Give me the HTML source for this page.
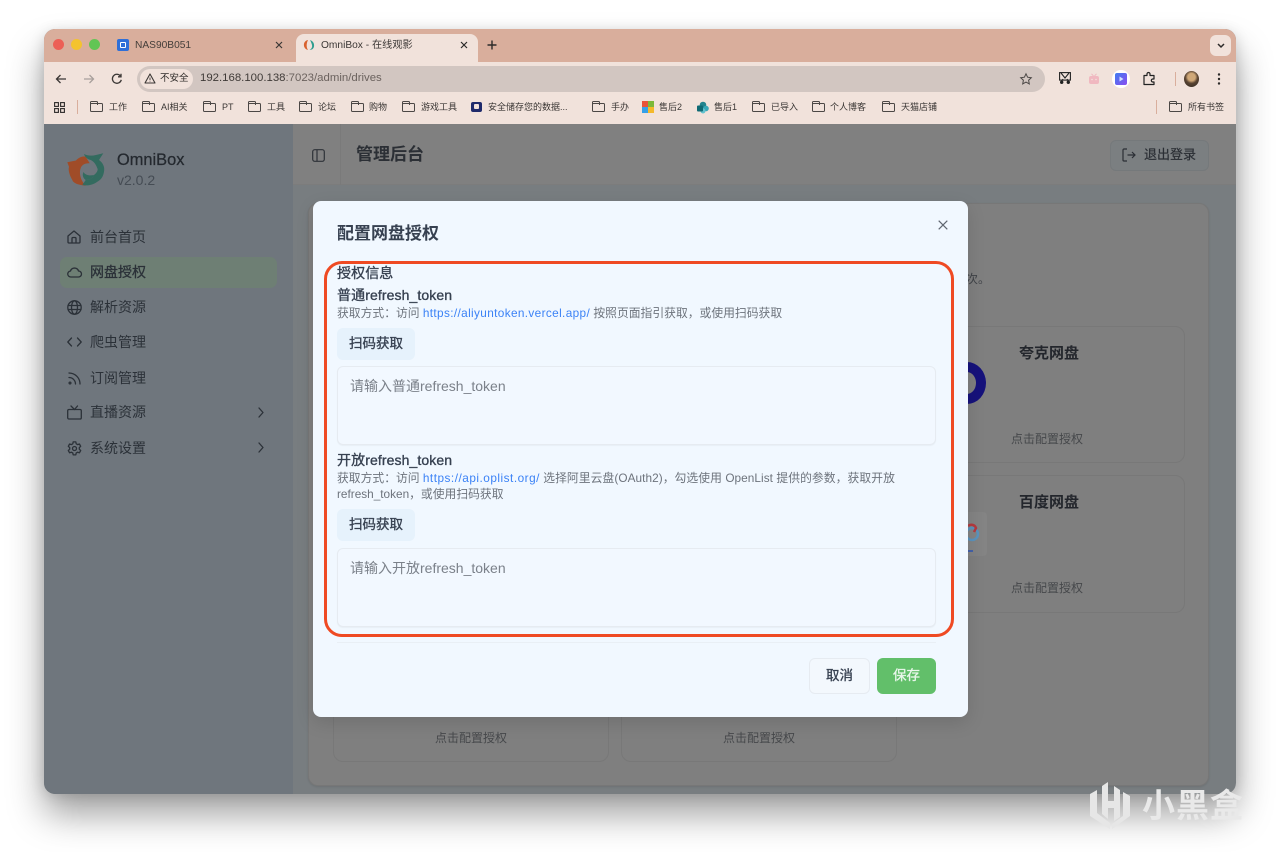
<!DOCTYPE html>
<html lang="zh"><head><meta charset="utf-8"><title>OmniBox</title>
<style>
*{box-sizing:border-box}
html,body{margin:0;padding:0;width:1280px;height:852px;overflow:hidden;background:#fff;font-family:"Liberation Sans","Noto Sans CJK SC",sans-serif}
.a{position:absolute;white-space:nowrap}
svg{position:absolute;overflow:visible}
.bm{position:absolute;top:100px;font-size:9px;line-height:14px;color:#3b3735;white-space:nowrap}
.fd{position:absolute;top:103px;width:13px;height:9px;border:1px solid #4b4745;border-radius:1.5px}
.fd:before{content:"";position:absolute;left:-1px;top:-3px;width:6px;height:3px;border:1px solid #4b4745;border-bottom:0;border-radius:1.5px 1.5px 0 0}
.nav{position:absolute;left:90px;font-size:14px;line-height:20px;color:#2b3138;white-space:nowrap}
.ic{fill:none;stroke:#2b3138;stroke-width:1.3;stroke-linecap:round;stroke-linejoin:round}
.card{position:absolute;background:#7f7f7f;border:1px solid #787878;border-radius:10px}
.hint{position:absolute;font-size:12px;line-height:16px;color:#46484b;white-space:nowrap}
.ct{position:absolute;font-size:15px;font-weight:700;line-height:20px;color:#23262c;white-space:nowrap}
.sub{position:absolute;left:337px;font-size:11.8px;line-height:16px;color:#6d737c;white-space:nowrap}
.sub a{color:#3b82f6;text-decoration:none}
.h3{position:absolute;left:337px;font-size:14px;letter-spacing:.1px;font-weight:400;-webkit-text-stroke:.35px #374151;line-height:18px;color:#374151;white-space:nowrap}
.scan{position:absolute;left:337px;width:78px;height:32px;background:#e6f2fc;border-radius:6px;font-size:13.5px;font-weight:400;-webkit-text-stroke:.35px #374151;line-height:32px;text-align:center;color:#374151}
.ta{position:absolute;left:337px;width:599px;height:79px;background:#f2f8ff;border:1px solid #e6ebf1;border-radius:6px;padding:10px 12px;font-size:14px;line-height:18px;color:#7b818a;box-shadow:0 1px 1px rgba(0,0,0,.04)}
</style></head><body>

<div class="a" style="left:44px;top:32px;width:1192px;height:762px;border-radius:11px;box-shadow:0 20px 36px rgba(0,0,0,.38),0 0 14px rgba(0,0,0,.15)"></div>
<div class="a" style="left:44px;top:29px;width:1192px;height:765px;border-radius:11px;overflow:hidden;background:#787d80">
  <div class="a" style="left:0;top:0;width:1192px;height:33px;background:#d9ae9c"></div>
  <div class="a" style="left:0;top:33px;width:1192px;height:62px;background:#f1e2db"></div>
  <div class="a" style="left:0;top:95px;width:249px;height:670px;background:#6f767d"></div>
  <div class="a" style="left:249px;top:95px;width:943px;height:61px;background:#808080;border-bottom:1px solid #7c7c7c"></div>
  <div class="a" style="left:264px;top:174px;width:901px;height:583px;background:#7f7f7f;border:1px solid #777;border-radius:10px;box-shadow:0 1px 2px rgba(0,0,0,.1)"></div>
</div>

<!-- traffic lights -->
<div class="a" style="left:53px;top:39px;width:11px;height:11px;border-radius:50%;background:#ec5f56"></div>
<div class="a" style="left:71px;top:39px;width:11px;height:11px;border-radius:50%;background:#f4c32f"></div>
<div class="a" style="left:89px;top:39px;width:11px;height:11px;border-radius:50%;background:#62c554"></div>

<!-- tabs -->
<div class="a" style="left:117px;top:39px;width:12px;height:12px;border-radius:2px;background:#2f6fd8"></div>
<div class="a" style="left:120px;top:42px;width:6px;height:6px;border:1.5px solid #fff;border-radius:1px"></div>
<div class="a" style="left:135px;top:38px;font-size:10.2px;line-height:15px;color:#443e3a">NAS90B051</div>
<svg style="left:275px;top:41px" width="8" height="8"><path d="M1 1l6 6M7 1l-6 6" stroke="#3b3735" stroke-width="1.2"/></svg>
<div class="a" style="left:296px;top:34px;width:182px;height:28px;background:#f1e2db;border-radius:8px 8px 0 0"></div>
<svg style="left:303px;top:39px" width="12" height="12" viewBox="0 0 12 12"><path d="M5 1C2 1.500.5 4 1 7c.4 2 2 3.500 4 4-1.500-2-2-6 0-10z" fill="#d9622f"/><path d="M7 1c3 1 4.500 3.500 4 6.500-.5 2.500-2.500 3.500-4.500 3.500 2-1 3-3 2.500-5C8.700 4.500 8 3 7 1z" fill="#2f9d8f"/></svg>
<div class="a" style="left:321px;top:38px;font-size:10.2px;line-height:15px;color:#3b3735">OmniBox - 在线观影</div>
<svg style="left:460px;top:41px" width="8" height="8"><path d="M1 1l6 6M7 1l-6 6" stroke="#2c2a29" stroke-width="1.2"/></svg>
<svg style="left:487px;top:40px" width="10" height="10"><path d="M5 .5v9M.5 5h9" stroke="#2c2a29" stroke-width="1.4"/></svg>
<div class="a" style="left:1210px;top:35px;width:21px;height:21px;background:#f1e2db;border-radius:6px"></div>
<svg style="left:1217px;top:43px" width="8" height="6"><path d="M1 1l3 3 3-3" fill="none" stroke="#2c2a29" stroke-width="1.5"/></svg>

<!-- toolbar -->
<svg style="left:55px;top:73px" width="12" height="12" viewBox="0 0 12 12"><path d="M11 6H1.500M5.500 2 1.500 6l4 4" fill="none" stroke="#3b3735" stroke-width="1.3"/></svg>
<svg style="left:83px;top:73px" width="12" height="12" viewBox="0 0 12 12"><path d="M1 6h9.500M6.500 2l4 4-4 4" fill="none" stroke="#a8a09c" stroke-width="1.3"/></svg>
<svg style="left:111px;top:73px" width="12" height="12" viewBox="0 0 12 12"><path d="M10.300 6.800A4.500 4.500 0 1 1 9.300 2.800M10 .8v3H7" fill="none" stroke="#3b3735" stroke-width="1.3"/></svg>
<div class="a" style="left:137px;top:66px;width:908px;height:26px;background:#d2c6c1;border-radius:13px"></div>
<div class="a" style="left:140px;top:69px;width:53px;height:20px;background:#f1e2db;border-radius:10px"></div>
<svg style="left:144px;top:73px" width="12" height="11" viewBox="0 0 12 11"><path d="M6 1 11 10H1z" fill="none" stroke="#3b3735" stroke-width="1.100" stroke-linejoin="round"/><path d="M6 4.500v2.700M6 8.200v.6" stroke="#3b3735" stroke-width=".9"/></svg>
<div class="a" style="left:160px;top:72px;font-size:9.5px;line-height:14px;color:#302c2a">不安全</div>
<div class="a" style="left:200px;top:71px;font-size:11.4px;line-height:15px;color:#3f3a37">192.168.100.138<span style="color:#6b625e">:7023/admin/drives</span></div>
<svg style="left:1020px;top:73px" width="12" height="12" viewBox="0 0 12 12"><path d="M6 .8 7.600 4.200l3.700.5-2.700 2.500.7 3.700L6 9.100l-3.300 1.800.7-3.700L.7 4.700l3.700-.5z" fill="none" stroke="#4b4745" stroke-width="1"/></svg>

<svg style="left:1059px;top:72px" width="12" height="13" viewBox="0 0 12 13"><rect x=".6" y=".6" width="10.800" height="7.500" fill="none" stroke="#222" stroke-width="1.100"/><path d="M2 1l4 5 4-5M4 7 2.800 9M8 7l1.200 2" fill="none" stroke="#222" stroke-width="1.100"/><circle cx="2.700" cy="10.300" r="1.700" fill="#222"/><circle cx="9.300" cy="10.300" r="1.700" fill="#222"/></svg>
<svg style="left:1088px;top:73px" width="12" height="12" viewBox="0 0 12 12"><rect x="1" y="3" width="10" height="8" rx="2" fill="#f0b8c0"/><path d="M3.500.8 5.500 3M8.500.8 6.500 3" stroke="#f0b8c0" stroke-width="1"/><circle cx="4" cy="6.500" r=".8" fill="#f1e2db"/><circle cx="8" cy="6.500" r=".8" fill="#f1e2db"/></svg>
<div class="a" style="left:1112px;top:70px;width:18px;height:18px;border-radius:50%;background:#fff"></div>
<div class="a" style="left:1115px;top:73px;width:12px;height:12px;border-radius:2px;background:linear-gradient(135deg,#3f7df0,#8a4df0)"></div>
<svg style="left:1119px;top:76px" width="5" height="6"><path d="M.5.500 4.500 3 .5 5.500z" fill="#cfe0ff"/></svg>
<svg style="left:1143px;top:72px" width="13" height="13" viewBox="0 0 13 13"><path d="M1 3.500h3V2a1.500 1.500 0 0 1 3 0v1.500h4v3.500h-1.200a1.500 1.500 0 0 0 0 3H11v2.500H1z" fill="none" stroke="#222" stroke-width="1.200" stroke-linejoin="round"/></svg>
<div class="a" style="left:1175px;top:72px;width:1px;height:14px;background:#d9ae9c"></div>
<div class="a" style="left:1184px;top:71px;width:15px;height:16px;border-radius:50%;background:radial-gradient(circle at 50% 38%,#d0a878 0 30%,#5a4432 50%,#2d2722 100%)"></div>
<svg style="left:1217px;top:73px" width="4" height="12"><circle cx="2" cy="1.500" r="1.200" fill="#2c2a29"/><circle cx="2" cy="6" r="1.200" fill="#2c2a29"/><circle cx="2" cy="10.500" r="1.200" fill="#2c2a29"/></svg>

<!-- bookmarks -->
<svg style="left:54px;top:102px" width="11" height="11" viewBox="0 0 11 11"><g fill="none" stroke="#2c2a29" stroke-width="1.100"><rect x=".6" y=".6" width="3.800" height="3.800"/><rect x="6.600" y=".6" width="3.800" height="3.800"/><rect x=".6" y="6.600" width="3.800" height="3.800"/><rect x="6.600" y="6.600" width="3.800" height="3.800"/></g></svg>
<div class="a" style="left:77px;top:100px;width:1px;height:14px;background:#d9ae9c"></div>
<div class="fd" style="left:90px"></div><div class="bm" style="left:109px">工作</div>
<div class="fd" style="left:142px"></div><div class="bm" style="left:161px">AI相关</div>
<div class="fd" style="left:203px"></div><div class="bm" style="left:222px">PT</div>
<div class="fd" style="left:248px"></div><div class="bm" style="left:267px">工具</div>
<div class="fd" style="left:299px"></div><div class="bm" style="left:318px">论坛</div>
<div class="fd" style="left:351px"></div><div class="bm" style="left:369px">购物</div>
<div class="fd" style="left:402px"></div><div class="bm" style="left:421px">游戏工具</div>
<div class="a" style="left:471px;top:102px;width:11px;height:10px;background:#1f2a6b;border-radius:2px"></div>
<div class="a" style="left:474px;top:104px;width:5px;height:5px;background:#f1e2db;border-radius:1px"></div>
<div class="bm" style="left:488px">安全储存您的数据...</div>
<div class="fd" style="left:592px"></div><div class="bm" style="left:611px">手办</div>
<div class="a" style="left:642px;top:101px;width:5.500px;height:5.500px;background:#e8533a"></div>
<div class="a" style="left:648px;top:101px;width:5.500px;height:5.500px;background:#7cb93a"></div>
<div class="a" style="left:642px;top:107px;width:5.500px;height:5.500px;background:#35a0e8"></div>
<div class="a" style="left:648px;top:107px;width:5.500px;height:5.500px;background:#f4b92c"></div>
<div class="bm" style="left:659px">售后2</div>
<svg style="left:696px;top:101px" width="13" height="13" viewBox="0 0 13 13"><circle cx="7" cy="4" r="3.300" fill="#22848f"/><circle cx="10" cy="7.500" r="2.800" fill="#37a8b8"/><circle cx="7" cy="10" r="2.500" fill="#63c2cf"/><rect x="1" y="4.500" width="6" height="6" rx="1" fill="#0f6a74"/></svg>
<div class="bm" style="left:714px">售后1</div>
<div class="fd" style="left:752px"></div><div class="bm" style="left:771px">已导入</div>
<div class="fd" style="left:812px"></div><div class="bm" style="left:830px">个人博客</div>
<div class="fd" style="left:882px"></div><div class="bm" style="left:901px">天猫店铺</div>
<div class="a" style="left:1156px;top:100px;width:1px;height:14px;background:#d9ae9c"></div>
<div class="fd" style="left:1169px"></div><div class="bm" style="left:1188px">所有书签</div>

<!-- sidebar -->
<svg style="left:67px;top:152px" width="38" height="36" viewBox="0 0 38 36">
<path d="M.3 10.300 9 8.500C12 5 16 4 18.700 4.700L22.700 11.300C18 11 14.500 13 13.700 16.300 12 20 13 28 18.700 33.700 11 33 6 31 5.300 28 2.500 23 1 18 2 14.700z" fill="#a04c28"/>
<path d="M17 2C21 4 25 4 29 3L36.300 1.300 32 8C36 11 38 15 37 19.700 36 26 33 28 30.300 29.700 26 33 20 34 15.300 33L18.700 28C23 28 26 26 27 23 31 20 31 17 30.300 16.300 29 12 26 9 23.700 8 20 7 18 5 17 2z" fill="#336b5f"/>
<path d="M16.500 20C18 23 22 24 27 23 26 26 23 28 18.700 28 16 26 15 23 16.500 20z" fill="#336b5f"/></svg>
<div class="a" style="left:117px;top:150px;font-size:16.4px;line-height:20px;color:#24292f;-webkit-text-stroke:.25px #24292f">OmniBox</div>
<div class="a" style="left:117px;top:171px;font-size:14px;line-height:18px;color:#454c54">v2.0.2</div>
<div class="a" style="left:60px;top:257px;width:217px;height:31px;background:#6e7f74;border-radius:7px"></div>

<svg class="ic" style="left:67px;top:230px" width="14" height="14" viewBox="0 0 14 14"><path d="M1 6 7 1l6 5v6a1 1 0 0 1-1 1H2a1 1 0 0 1-1-1zM5 13V8.500a1 1 0 0 1 1-1h2a1 1 0 0 1 1 1V13"/></svg>
<div class="nav" style="top:227px">前台首页</div>
<svg class="ic" style="left:67px;top:266px" width="15" height="12" viewBox="0 0 15 12"><path d="M4 11a3 3 0 0 1-.5-6A4.200 4.200 0 0 1 11.500 5a3 3 0 0 1 0 6z"/></svg>
<div class="nav" style="top:262px;-webkit-text-stroke:.3px #2b3138">网盘授权</div>
<svg class="ic" style="left:67px;top:300px" width="15" height="15" viewBox="0 0 15 15"><circle cx="7.500" cy="7.500" r="6.700"/><ellipse cx="7.500" cy="7.500" rx="3" ry="6.700"/><path d="M1 5.500h13M1 9.500h13"/></svg>
<div class="nav" style="top:297px">解析资源</div>
<svg class="ic" style="left:67px;top:337px" width="15" height="10" viewBox="0 0 15 10"><path d="M4.500 1 .8 5l3.700 4M10.500 1l3.700 4-3.700 4"/></svg>
<div class="nav" style="top:332px">爬虫管理</div>
<svg class="ic" style="left:68px;top:372px" width="13" height="13" viewBox="0 0 13 13"><path d="M1 1a11 11 0 0 1 11 11M1 5.500a6.500 6.500 0 0 1 6.500 6.500"/><circle cx="2" cy="11" r=".9"/></svg>
<div class="nav" style="top:368px">订阅管理</div>
<svg class="ic" style="left:67px;top:405px" width="15" height="15" viewBox="0 0 15 15"><rect x=".7" y="4.500" width="13.600" height="9.500" rx="1.300"/><path d="M4 1l3.500 3.500L10.500 1"/></svg>
<div class="nav" style="top:402px">直播资源</div>
<svg class="ic" style="left:257px;top:407px" width="8" height="11" viewBox="0 0 8 11"><path d="M2 1l4 4.500L2 10"/></svg>
<svg class="ic" style="left:67px;top:441px" width="15" height="15" viewBox="0 0 15 15"><path d="M6.200.9h2.600l.4 1.900 1.400.8 1.800-.6 1.300 2.300-1.400 1.300v1.600l1.400 1.300-1.300 2.300-1.800-.6-1.400.8-.4 1.900H6.200l-.4-1.900-1.400-.8-1.800.6-1.300-2.300 1.400-1.300V6.600L1.300 5.300l1.300-2.300 1.800.6 1.400-.8z"/><circle cx="7.500" cy="7.500" r="2"/></svg>
<div class="nav" style="top:438px">系统设置</div>
<svg class="ic" style="left:257px;top:442px" width="8" height="11" viewBox="0 0 8 11"><path d="M2 1l4 4.500L2 10"/></svg>

<!-- header -->
<div class="a" style="left:340px;top:124px;width:1px;height:61px;background:#7a7a7a"></div>
<svg style="left:312px;top:149px" width="13" height="13" viewBox="0 0 13 13"><rect x=".7" y=".7" width="11.600" height="11.600" rx="2" fill="none" stroke="#2e3238" stroke-width="1.200"/><path d="M5 .7v11.600" stroke="#2e3238" stroke-width="1.200"/></svg>
<div class="a" style="left:356px;top:144px;font-size:17px;font-weight:700;line-height:22px;color:#2b2f35">管理后台</div>
<div class="a" style="left:1110px;top:140px;width:99px;height:31px;background:#7b7f81;border:1px solid #75797b;border-radius:6px"></div>
<svg style="left:1122px;top:148px" width="14" height="14" viewBox="0 0 14 14"><path d="M5 1H2a1 1 0 0 0-1 1v10a1 1 0 0 0 1 1h3M5.500 7H13M10 4l3 3-3 3" fill="none" stroke="#2b2f35" stroke-width="1.200"/></svg>
<div class="a" style="left:1144px;top:146px;font-size:13px;line-height:18px;color:#2b2f35;-webkit-text-stroke:.2px #2b2f35">退出登录</div>

<!-- cards behind -->
<div class="card" style="left:900px;top:326px;width:285px;height:137px"></div>
<div class="ct" style="left:1019px;top:344px">夸克网盘</div>
<div class="hint" style="left:1011px;top:431px">点击配置授权</div>
<div class="card" style="left:900px;top:475px;width:285px;height:138px"></div>
<div class="ct" style="left:1019px;top:493px">百度网盘</div>
<div class="hint" style="left:1011px;top:580px">点击配置授权</div>
<div class="a" style="left:950px;top:512px;width:37px;height:44px;background:#848484;border-radius:4px"></div>
<svg style="left:960px;top:518px" width="28" height="40" viewBox="0 0 28 40"><circle cx="12" cy="16" r="6" fill="none" stroke="#5a93bd" stroke-width="2.500"/><path d="M8 8a5 5 0 0 1 8 2l-2 4" fill="none" stroke="#b53a3f" stroke-width="2.500"/><path d="M8 33h5" stroke="#3056b5" stroke-width="1.500"/></svg>
<div class="a" style="left:948px;top:362px;width:38px;height:42px;border-radius:50%;border:10px solid #16127b"></div>
<div class="a" style="left:966px;top:271px;font-size:12px;line-height:16px;color:#3f4247">次。</div>

<div class="card" style="left:333px;top:690px;width:276px;height:72px"></div>
<div class="hint" style="left:435px;top:730px">点击配置授权</div>
<div class="card" style="left:621px;top:690px;width:276px;height:72px"></div>
<div class="hint" style="left:723px;top:730px">点击配置授权</div>

<!-- modal -->
<div class="a" style="left:313px;top:201px;width:655px;height:516px;background:#f1f8ff;border-radius:8px;box-shadow:0 6px 18px rgba(0,0,0,.12)"></div>
<div class="a" style="left:337px;top:223px;font-size:17px;font-weight:700;line-height:22px;color:#374151">配置网盘授权</div>
<svg style="left:938px;top:220px" width="10" height="10"><path d="M.7.700l8.600 8.600M9.300.700.7 9.300" stroke="#5f6670" stroke-width="1.200"/></svg>

<div class="h3" style="top:264px">授权信息</div>
<div class="h3" style="top:286px">普通refresh_token</div>
<div class="sub" style="top:305px">获取方式：访问 <a style="letter-spacing:.36px">https://aliyuntoken.vercel.app/</a> 按照页面指引获取，或使用扫码获取</div>
<div class="scan" style="top:328px">扫码获取</div>
<div class="ta" style="top:366px">请输入普通refresh_token</div>

<div class="h3" style="top:451px">开放refresh_token</div>
<div class="sub" style="top:470px">获取方式：访问 <a style="letter-spacing:.5px">https://api.oplist.org/</a> <span style="letter-spacing:.06px">选择阿里云盘(OAuth2)，勾选使用 OpenList 提供的参数，获取开放</span></div>
<div class="sub" style="top:486px">refresh_token，或使用扫码获取</div>
<div class="scan" style="top:509px">扫码获取</div>
<div class="ta" style="top:548px">请输入开放refresh_token</div>

<div class="a" style="left:337px;top:642px;width:599px;height:1px;background:#e9eff5"></div>
<div class="a" style="left:809px;top:658px;width:61px;height:36px;background:#f3f8fd;border:1px solid #e6ebf1;border-radius:6px;font-size:13.5px;-webkit-text-stroke:.35px #374151;line-height:34px;text-align:center;color:#374151">取消</div>
<div class="a" style="left:877px;top:658px;width:59px;height:36px;background:#62bf6a;border-radius:6px;font-size:13.5px;-webkit-text-stroke:.3px #eaf7ec;line-height:36px;text-align:center;color:#eaf7ec">保存</div>

<!-- annotation -->
<div class="a" style="left:324px;top:261px;width:630px;height:376px;border:3px solid #ef4a23;border-radius:18px"></div>

<!-- watermark -->
<svg style="left:1090px;top:781px" width="41" height="49" viewBox="0 0 41 49"><g fill="#e6e6e6"><path d="M0 13 7 9V32L20 42V48L0 35Z"/><path d="M12 5 18 1V20H24V27H18V38L12 33Z"/><path d="M24 5 30 9V36L24 40Z"/><path d="M33 11 40 15V35L22 48V43L33 35Z"/></g></svg>
<div class="a" style="left:1142px;top:785px;font-size:33px;font-weight:700;line-height:42px;color:#e9e9e9;letter-spacing:1px">小黑盒</div>
</body></html>
